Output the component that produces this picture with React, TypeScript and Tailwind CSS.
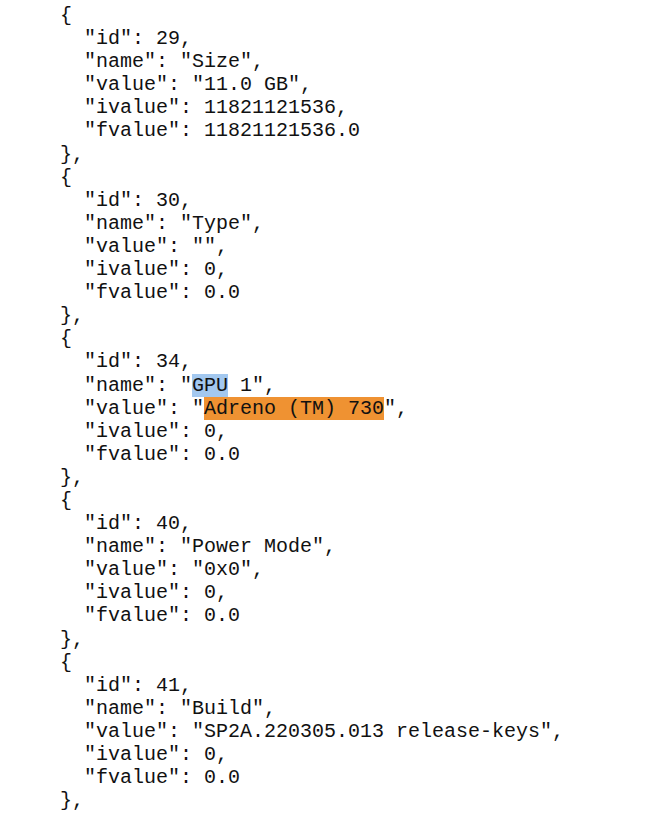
import React from "react";

type Part = string | { t: string; hl: "blue" | "orange" };
type Line = Part[];

const blocks: { id: number; name: Part[]; value: Part[]; ivalue: string; fvalue: string }[] = [
  { id: 29, name: ['"Size"'], value: ['"11.0 GB"'], ivalue: "11821121536", fvalue: "11821121536.0" },
  { id: 30, name: ['"Type"'], value: ['""'], ivalue: "0", fvalue: "0.0" },
  {
    id: 34,
    name: ['"', { t: "GPU", hl: "blue" }, ' 1"'],
    value: ['"', { t: "Adreno (TM) 730", hl: "orange" }, '"'],
    ivalue: "0",
    fvalue: "0.0",
  },
  { id: 40, name: ['"Power Mode"'], value: ['"0x0"'], ivalue: "0", fvalue: "0.0" },
  { id: 41, name: ['"Build"'], value: ['"SP2A.220305.013 release-keys"'], ivalue: "0", fvalue: "0.0" },
];

const lines: Line[] = [];
blocks.forEach((b) => {
  lines.push(["{"]);
  lines.push([`  "id": ${b.id},`]);
  lines.push(['  "name": ', ...b.name, ","]);
  lines.push(['  "value": ', ...b.value, ","]);
  lines.push([`  "ivalue": ${b.ivalue},`]);
  lines.push([`  "fvalue": ${b.fvalue}`]);
  lines.push(["},"]);
});

export default function App() {
  return (
    <div className="w-[666px] h-[815px] overflow-hidden bg-white pl-[60px] pt-[4px]">
      <pre
        className="text-[20px] leading-[23.1px] text-[#111]"
        style={{ fontFamily: '"Liberation Mono", "Courier New", monospace' }}
      >
        {lines.map((ln, i) => (
          <div key={i}>
            {ln.map((p, j) =>
              typeof p === "string" ? (
                <span key={j}>{p}</span>
              ) : (
                <span
                  key={j}
                  className={p.hl === "blue" ? "bg-[#a3c8ef]" : "bg-[#ef9232]"}
                >
                  {p.t}
                </span>
              )
            )}
          </div>
        ))}
      </pre>
    </div>
  );
}
